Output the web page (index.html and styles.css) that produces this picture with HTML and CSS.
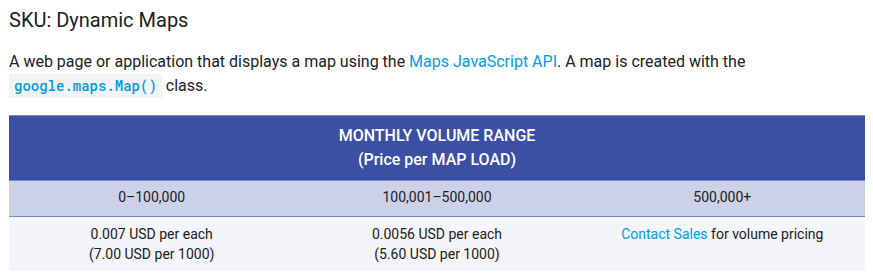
FILE: index.html
```html
<!DOCTYPE html>
<html lang="en">
<head>
<meta charset="utf-8">
<title>SKU: Dynamic Maps</title>
<link rel="stylesheet" href="styles.css">
</head>
<body>
<main class="page">
  <h3 class="sku-title">SKU: Dynamic Maps</h3>
  <p class="sku-desc">A web page or application that displays a map using the <a href="#" class="link">Maps JavaScript API</a>. A map is created with the <code class="code">google.maps.Map()</code> class.</p>
  <table class="pricing">
    <thead>
      <tr class="head-row">
        <th colspan="3">MONTHLY VOLUME RANGE<br>(Price per MAP LOAD)</th>
      </tr>
    </thead>
    <tbody>
      <tr class="range-row">
        <td>0–100,000</td>
        <td>100,001–500,000</td>
        <td>500,000+</td>
      </tr>
      <tr class="price-row">
        <td>0.007 USD per each<br>(7.00 USD per 1000)</td>
        <td>0.0056 USD per each<br>(5.60 USD per 1000)</td>
        <td><a href="#" class="link">Contact Sales</a> for volume pricing</td>
      </tr>
    </tbody>
  </table>
</main>
</body>
</html>
```

FILE: styles.css
```css
html, body {
  margin: 0;
  padding: 0;
  background: #ffffff;
}

body {
  font-family: Roboto, "Liberation Sans", Arial, sans-serif;
  color: #202124;
}

.page {
  padding: 6px 8px 0 9px;
}

.sku-title {
  margin: 0;
  font-size: 20px;
  font-weight: 400;
  line-height: 28px;
  color: #202124;
}

.sku-desc {
  margin: 16px 0 17px;
  font-size: 16px;
  line-height: 24px;
  color: #202124;
}

.link {
  color: #039be5;
  text-decoration: none;
}

.code {
  font-family: "Roboto Mono", "DejaVu Sans Mono", "Liberation Mono", monospace;
  font-size: 14px;
  font-weight: 500;
  color: #039be5;
  background: #f1f3f4;
  padding: 2px 5px 3px;
}

.pricing {
  width: 856px;
  border-collapse: collapse;
  table-layout: fixed;
  font-size: 14px;
}

.head-row th {
  background: #3b4fa4;
  color: #ffffff;
  font-size: 16px;
  font-weight: 500;
  line-height: 24px;
  padding: 8px 0;
  border-top: 1px solid #7986cb;
  border-bottom: 1px solid #7986cb;
  text-align: center;
}

.range-row td {
  background: #cdd1e8;
  line-height: 20px;
  padding: 6px 0 9px;
  text-align: center;
  border-bottom: 1px solid #7986cb;
}

.price-row td {
  background: #f4f5f9;
  line-height: 20px;
  padding: 7px 0 7px;
  text-align: center;
  vertical-align: top;
}
```
